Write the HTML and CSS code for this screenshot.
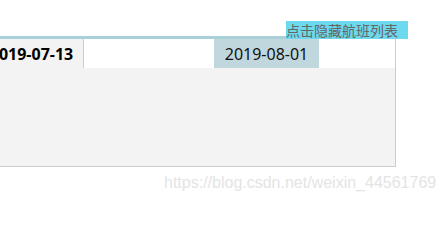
FILE: index.html
```html
<!DOCTYPE html>
<html lang="zh-CN">
<head>
<meta charset="utf-8">
<title>航班日期</title>
<link rel="stylesheet" href="styles.css">
</head>
<body>
<div class="page">
  <div class="widget">
    <div class="tip">点击隐藏航班列表</div>
    <div class="box">
      <div class="row">
        <div class="strip">
          <div class="cell cell-past">2019-07-13</div>
          <div class="cell cell-gap"></div>
          <div class="cell cell-active">2019-08-01</div>
        </div>
      </div>
      <div class="panel"></div>
    </div>
  </div>
  <div class="watermark">https://blog.csdn.net/weixin_44561769</div>
</div>
</body>
</html>
```
FILE: styles.css
```css
html, body {
  margin: 0;
  padding: 0;
  background: #ffffff;
}

.page {
  width: 446px;
  height: 201px;
  overflow: hidden;
  font-family: "Noto Sans", "Noto Sans CJK SC", sans-serif;
}

.widget {
  position: relative;
  margin-top: 36px;
  width: 408px;
  border-top: 3px solid #a9d0d8;
}

.tip {
  position: absolute;
  right: 0;
  bottom: 100%;
  width: 122px;
  height: 18px;
  background: #6cd9ef;
  color: #666666;
  font-family: "Noto Sans CJK SC", sans-serif;
  font-size: 14px;
  line-height: 18px;
  white-space: nowrap;
}

.box {
  width: 395px;
  border-right: 1px solid #cccccc;
  border-bottom: 1px solid #cccccc;
}

.row {
  height: 29px;
  overflow: hidden;
  background: #ffffff;
}

.strip {
  display: flex;
  height: 29px;
  margin-left: -22px;
}

.cell {
  box-sizing: border-box;
  height: 29px;
  display: flex;
  align-items: center;
  justify-content: center;
  font-size: 16px;
  color: #111111;
  white-space: nowrap;
}

.cell-past {
  width: 106px;
  background: #f3f3f3;
  border-right: 1px solid #cccccc;
  font-weight: bold;
  color: #000000;
  padding-left: 2px;
}

.cell-gap {
  width: 130px;
  background: #ffffff;
}

.cell-active {
  width: 105px;
  background: #c0d7dd;
}

.panel {
  height: 98px;
  background: #f3f3f3;
}

.watermark {
  margin-top: 7px;
  margin-left: 164px;
  font-family: "Liberation Sans", Arial, sans-serif;
  font-size: 16px;
  line-height: 18px;
  color: #e4e4e4;
  white-space: nowrap;
}
```
